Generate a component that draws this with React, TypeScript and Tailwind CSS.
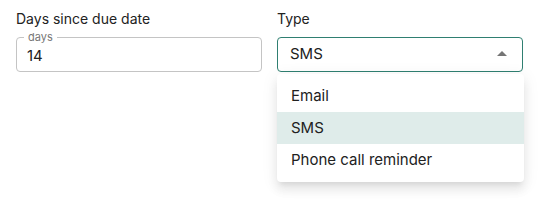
import React, { useState } from 'react';

const options = ['Email', 'SMS', 'Phone call reminder'];

const App: React.FC = () => {
  const [days, setDays] = useState('14');
  const [type] = useState('SMS');

  return (
    <div className="w-[540px] h-[204px] bg-white font-['Inter',sans-serif] text-[#212121] relative">
      <div className="flex gap-[15px] pl-4 pt-[9px]">
        {/* days field */}
        <div className="w-[246px]">
          <div className="text-[14px] leading-5 text-[#222]">Days since due date</div>
          <div className="relative mt-2 h-[35px] border border-[#c4c4c4] rounded-[4px]">
            <span className="absolute left-[7px] -top-[8px] px-[4px] bg-white text-[11px] leading-[14px] text-[#777]">
              days
            </span>
            <input
              value={days}
              onChange={(e) => setDays(e.target.value)}
              className="w-full h-full bg-transparent pl-[10px] pt-[2px] text-[15px] outline-none"
            />
          </div>
        </div>

        {/* type select */}
        <div className="w-[246px] relative">
          <div className="text-[14px] leading-5 text-[#222]">Type</div>
          <div className="mt-2 h-[35px] border border-[#2f7f71] rounded-[4px] flex items-center pl-3 pr-[15px]">
            <span className="flex-1 text-[15px]">{type}</span>
            <svg width="10" height="5" viewBox="0 0 10 5" className="mb-[2px]">
              <path d="M0 5 L5 0 L10 5 Z" fill="#757575" />
            </svg>
          </div>

          <div className="absolute left-0 top-[65px] w-[247px] bg-white rounded-[4px] py-1.5 shadow-[0_5px_5px_-3px_rgba(0,0,0,0.08),0_8px_10px_1px_rgba(0,0,0,0.06),0_3px_16px_2px_rgba(0,0,0,0.06)]">
            {options.map((o) => (
              <div
                key={o}
                className={`h-8 flex items-center pl-[14px] text-[15px] ${o === type ? 'bg-[#dfecea]' : ''}`}
              >
                {o}
              </div>
            ))}
          </div>
        </div>
      </div>
    </div>
  );
};

export default App;
